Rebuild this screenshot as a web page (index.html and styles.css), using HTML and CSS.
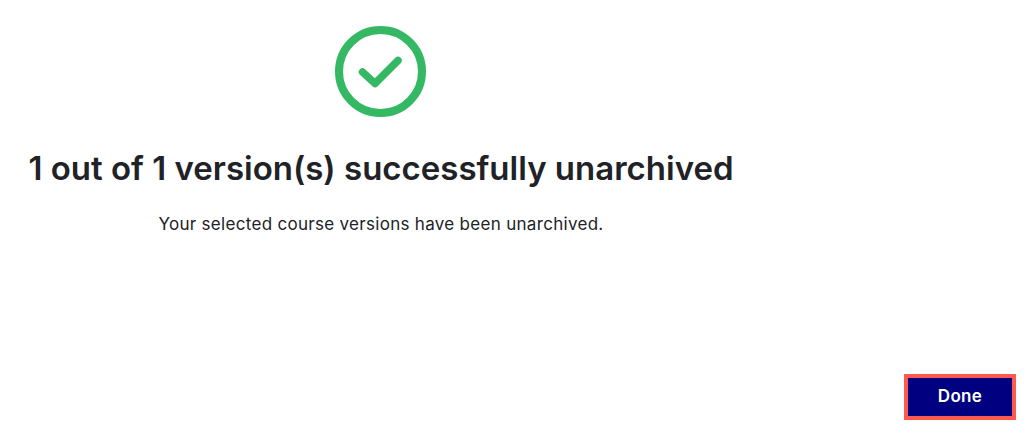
FILE: index.html
```html
<!DOCTYPE html>
<html>
<head>
  <link rel="stylesheet" href="styles.css">
</head>
<body>
  <div class="dialog">
    <div class="result-body">
      <svg class="status-icon" viewBox="0 0 91 91" width="91" height="91">
        <circle cx="45.5" cy="45.5" r="41.5" fill="none" stroke="#34b864" stroke-width="8"/>
        <path d="M27.5 46 L40 57.5 L63 34.5" fill="none" stroke="#34b864" stroke-width="7.5" stroke-linecap="round" stroke-linejoin="round"/>
      </svg>
      <h1 class="result-title">1 out of 1 version(s) successfully unarchived</h1>
      <p class="result-text">Your selected course versions have been unarchived.</p>
    </div>
    <div class="actions">
      <button class="done-button">Done</button>
    </div>
  </div>
</body>
</html>
```

FILE: styles.css
```css
body {
  font-family: "Inter", "Liberation Sans", sans-serif;
  background-color: #ffffff;
  color: #212227;
  margin: 0;
}

.dialog {
  height: 434px;
  display: flex;
  flex-direction: column;
  box-sizing: border-box;
  padding: 26px 10px 14px 0;
}

.result-body {
  width: 762px;
  display: flex;
  flex-direction: column;
  align-items: center;
  flex: 1;
}

.status-icon {
  display: block;
  margin-right: 1px;
}

.result-title {
  font-size: 33px;
  line-height: 40px;
  font-weight: 600;
  margin: 31px 0 0;
}

.result-text {
  font-size: 17px;
  line-height: 24px;
  letter-spacing: 0.3px;
  margin: 24px 0 0;
}

.actions {
  display: flex;
  justify-content: flex-end;
}

.done-button {
  width: 112px;
  height: 46px;
  background-color: #000080;
  border: 4px solid #ff5a4f;
  color: #ffffff;
  font-family: inherit;
  font-size: 17px;
  font-weight: 600;
  letter-spacing: 0.3px;
  padding: 0 0 2px;
}
```
